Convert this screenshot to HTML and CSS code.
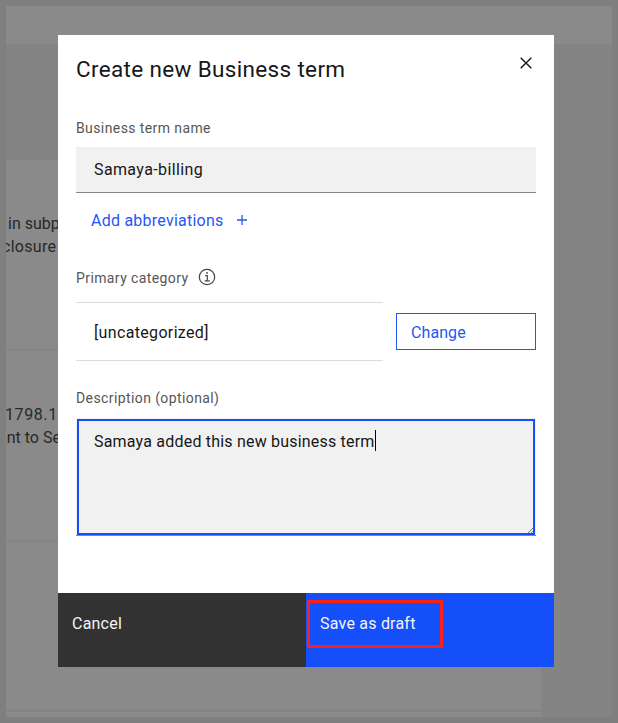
FILE: index.html
```html
<!DOCTYPE html>
<html lang="en">
<head>
<meta charset="utf-8">
<title>Create new Business term</title>
<link rel="stylesheet" href="styles.css">
</head>
<body>
<div class="page">
  <div class="topbar"></div>
  <div class="banner"></div>
  <div class="content">
    <section class="row"><p class="line in"><span>in subp</span></p><p class="line closure"><span>closure</span></p></section>
    <section class="row"><p class="line num"><span>1798.1</span></p><p class="line ant"><span>ant to Se</span></p></section>
    <section class="row row-third"></section>
  </div>
</div>
<div class="modal" role="dialog" aria-labelledby="title">
  <div class="modal-body">
    <header class="modal-header">
      <h1 id="title">Create new Business term</h1>
      <svg class="close" viewBox="0 0 12 12"><path d="M.7.7 11.3 11.3M11.3.7.7 11.3"/></svg>
    </header>
    <div class="label name-label"><span>Business term name</span></div>
    <div class="input"><span class="t-name">Samaya-billing</span></div>
    <div class="add"><span class="t-add">Add abbreviations</span><svg class="plus" viewBox="0 0 10 10"><path d="M5 0V10M0 5H10"/></svg></div>
    <div class="label category-label"><span>Primary category</span>
      <svg class="info" viewBox="0 0 18 18"><circle cx="9" cy="9" r="7.7"/><path d="M7.2 7.6H9.3V12.7M6.6 12.8H11.7"/><circle class="dot" cx="9" cy="4.9" r=".95"/></svg>
    </div>
    <div class="category">
      <div class="category-value"><span class="t-cat">[uncategorized]</span></div>
      <button class="change"><span class="t-change">Change</span></button>
    </div>
    <div class="label description-label"><span>Description (optional)</span></div>
    <div class="textarea"><div class="textarea-focus"><span class="t-text">Samaya added this new business term</span><i class="caret"></i>
      <svg class="grip" viewBox="0 0 5 5"><path d="M0 5 5 0M3.2 5 5 3.2"/></svg></div></div>
  </div>
  <footer class="modal-footer">
    <button class="cancel"><span class="t-cancel">Cancel</span></button>
    <button class="save"><span class="highlight"><span class="t-save">Save as draft</span></span></button>
  </footer>
</div>
</body>
</html>
```

FILE: styles.css
```css
* { box-sizing: border-box; }
body { margin: 0; width: 618px; height: 723px; overflow: hidden; background: #7f7f7f; font: 16px/22px Roboto, "Liberation Sans", sans-serif; color: #171717; }
h1, p { margin: 0; font-weight: 400; }
button { border: 0; margin: 0; padding: 0; font: inherit; text-align: left; }
svg { fill: none; display: block; }
span { white-space: nowrap; }

.page { margin: 6px; width: 606px; height: 711px; background: #848484; overflow: hidden; }
.topbar { height: 38px; background: #8a8a8a; }
.banner { height: 116px; }
.content { width: 535px; height: 557px; background: #8a8a8a; color: #282828; }
.row { height: 191px; padding-top: 52px; border-bottom: 2px solid #848484; }
.row-third { height: 170px; }
.line { height: 23px; line-height: 23px; }
.in { padding-left: 2px; }
.closure { letter-spacing: .3px; }
.closure span { margin-left: -4px; }
.num { letter-spacing: .6px; }
.num span { margin-left: -1px; }
.ant span { margin-left: -8px; }

.modal { position: absolute; left: 58px; top: 35px; width: 496px; height: 632px; background: #fff; }
.modal-body { height: 558px; padding: 0 18px; }
.modal-header { display: flex; justify-content: space-between; height: 82px; padding-top: 19px; }
h1 { font-size: 22.5px; line-height: 30px; letter-spacing: .34px; }
.close { width: 12px; height: 12px; margin: 2.5px 4px 0 0; stroke: #171717; stroke-width: 1.4; }
.label { display: flex; color: #565656; font-size: 14px; line-height: 22px; letter-spacing: .4px; }
.input { height: 46px; margin-top: 8px; padding: 12px 18px 10px; background: #f1f1f1; border-bottom: 1px solid #868686; }
.t-name { letter-spacing: .38px; }
.add { display: flex; align-items: center; gap: 13px; height: 22px; margin: 16px 0 0 15px; color: #1f57f5; }
.t-add { padding-top: 2px; letter-spacing: .24px; }
.plus { width: 10px; height: 10px; stroke: #1f57f5; stroke-width: 1.3; }
.category-label { margin-top: 36px; height: 22px; }
.info { width: 18px; height: 18px; margin: 1px 0 0 9px; stroke: #454545; stroke-width: 1.2; }
.dot { fill: #454545; stroke: none; }
.category { display: flex; align-items: center; justify-content: space-between; height: 59px; margin-top: 13px; }
.category-value { width: 307px; height: 59px; padding: 19px 18px 17px; border: solid #dcdcdc; border-width: 1px 0; }
.t-cat { letter-spacing: .34px; }
.change { width: 140px; height: 37px; padding: 2px 0 0 14px; border: 1px solid #1f57f5; background: #fff; color: #1f57f5; }
.t-change { letter-spacing: .08px; }
.description-label { margin-top: 26px; }
.textarea { height: 118px; margin-top: 9px; padding: 1px 1px 0; background: #f1f1f1; border-bottom: 1px solid #868686; }
.textarea-focus { position: relative; display: flex; align-items: flex-start; height: 116px; border: 2px solid #154ffa; padding: 9px 15px; }
.t-text { padding-top: 1px; letter-spacing: .2px; }
.caret { width: 1px; height: 21px; background: #000; }
.grip { position: absolute; right: 0; bottom: 0; width: 5px; height: 5px; stroke: #555; stroke-width: .8; }
.modal-footer { display: flex; height: 74px; }
.modal-footer button { width: 248px; height: 74px; color: #f4f4f4; display: flex; align-items: flex-start; }
.modal-footer .cancel { padding: 20px 14px; background: #323232; }
.t-cancel { letter-spacing: .22px; }
.modal-footer .save { padding: 7px 1px; background: #154ffa; }
.highlight { width: 136px; height: 48px; padding: 10px 10px 8px; border: 3px solid #f91f1a; }
.t-save { letter-spacing: .22px; }
```
